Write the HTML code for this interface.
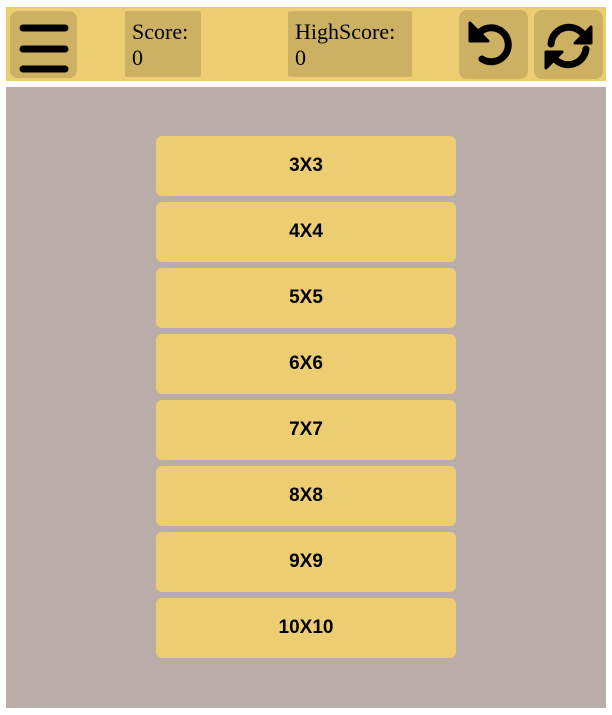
<!DOCTYPE html>
<html><head><style>
body{margin:0;width:612px;height:715px;background:#fff;position:relative;font-family:"Liberation Serif",serif;}
.hdr{position:absolute;left:6px;top:7px;width:600px;height:74px;background:#edcd72;}
.b{position:absolute;background:#cdb162;border-radius:6px;}
.sc{font-size:22px;line-height:26px;padding:8px 0 0 7px;box-sizing:border-box;border-radius:2px;color:#000;}
.main{position:absolute;left:6px;top:87px;width:600px;height:621px;background:#baaca9;}
.btn{position:absolute;left:150px;width:300px;height:60px;background:#edcd72;border-radius:6px;font:bold 19px "Liberation Sans",sans-serif;text-align:center;line-height:60px;}
</style></head><body>
<div class="hdr"></div>
<div class="b" style="left:10px;top:11px;width:67px;height:67px;border-radius:8px">
<svg width="67" height="67" viewBox="0 0 67 67"><g stroke="#000" stroke-width="7" stroke-linecap="round"><line x1="13" y1="17" x2="55" y2="17"/><line x1="13" y1="38" x2="55" y2="38"/><line x1="13" y1="58" x2="55" y2="58"/></g></svg></div>
<div class="b sc" style="left:125px;top:11px;width:76px;height:66px">Score:<br>0</div>
<div class="b sc" style="left:288px;top:11px;width:124px;height:66px">HighScore:<br>0</div>
<div class="b" style="left:459px;top:10px;width:69px;height:69px;border-radius:8px">
<svg width="69" height="69" viewBox="0 0 69 69"><path d="M21 22 A17 17 0 1 1 23 49" fill="none" stroke="#000" stroke-width="7" stroke-linecap="round"/><path d="M11 13 L11 31 L29 31 Z" fill="#000" stroke="#000" stroke-width="3" stroke-linejoin="round"/></svg></div>
<div class="b" style="left:534px;top:10px;width:69px;height:69px;border-radius:8px">
<svg width="69" height="69" viewBox="0 0 69 69"><path d="M17 34 A18 18 0 0 1 49 24" fill="none" stroke="#000" stroke-width="7" stroke-linecap="round"/><path d="M52 39 A18 18 0 0 1 21 49" fill="none" stroke="#000" stroke-width="7" stroke-linecap="round"/><path d="M57 17 L57 33 L41 33 Z" fill="#000" stroke="#000" stroke-width="3" stroke-linejoin="round"/><path d="M12 58 L12 42 L28 42 Z" fill="#000" stroke="#000" stroke-width="3" stroke-linejoin="round"/></svg></div>
<div class="main">
<div class="btn" style="top:49px">3X3</div>
<div class="btn" style="top:115px">4X4</div>
<div class="btn" style="top:181px">5X5</div>
<div class="btn" style="top:247px">6X6</div>
<div class="btn" style="top:313px">7X7</div>
<div class="btn" style="top:379px">8X8</div>
<div class="btn" style="top:445px">9X9</div>
<div class="btn" style="top:511px">10X10</div>
</div>
</body></html>
